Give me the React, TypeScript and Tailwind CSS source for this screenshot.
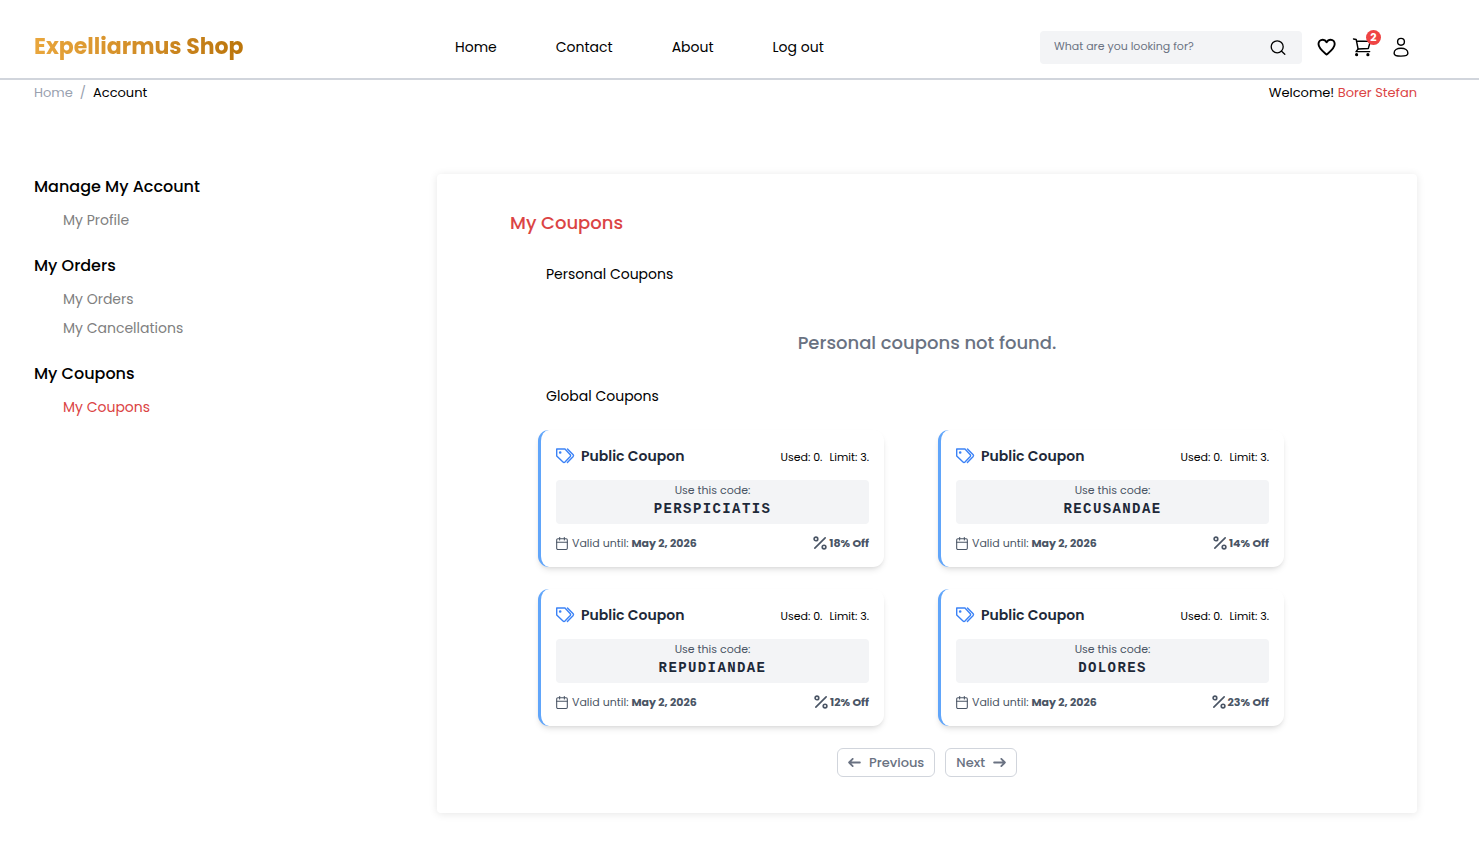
import { Calendar, Percent } from "lucide-react";

type Coupon = { code: string; discount: number };

const coupons: Coupon[] = [
  { code: "PERSPICIATIS", discount: 18 },
  { code: "RECUSANDAE", discount: 14 },
  { code: "REPUDIANDAE", discount: 12 },
  { code: "DOLORES", discount: 23 },
];

const menu = [
  { title: "Manage My Account", items: ["My Profile"] },
  { title: "My Orders", items: ["My Orders", "My Cancellations"] },
  { title: "My Coupons", items: ["My Coupons"] },
];

function TagsIcon() {
  return (
    <svg className="h-4 w-[19px] text-[#3b82f6]" viewBox="0 0 19 16" fill="none" stroke="currentColor" strokeWidth="1.4" strokeLinejoin="round" strokeLinecap="round">
      <path d="M0.7 1H9L14.300 6.700Q15 7.600 14.300 8.500L9 14.100Q8 15.100 7 14.100L0.7 7.900Z" />
      <path d="M11.500 1L17.200 6.800Q17.900 7.600 17.200 8.400L11.400 14.600" />
      <circle cx="4.200" cy="4.500" r="0.600" fill="currentColor" />
    </svg>
  );
}

function Header() {
  return (
    <header className="flex h-20 items-center border-b-2 border-gray-300 pl-[34px] pr-[68px] pt-4">
      <a
        href="#"
        className="w-[421px] shrink-0 text-[22px] leading-8 font-bold"
      >
        <span className="bg-linear-to-r from-[#e9a63c] to-[#bb750a] bg-clip-text text-transparent">
          Expelliarmus Shop
        </span>
      </a>
      <nav className="flex gap-[59px] text-sm leading-6">
        <a href="#">Home</a>
        <a href="#">Contact</a>
        <a href="#">About</a>
        <a href="#">Log out</a>
      </nav>
      <div className="ml-auto flex items-center">
        <form className="flex h-[33px] w-[262px] items-center rounded bg-gray-100 pl-3.5 pr-4">
          <input
            type="text"
            aria-label="Search"
            placeholder="What are you looking for?"
            className="min-w-0 flex-1 bg-transparent pb-0.5 text-[11px] placeholder:text-gray-500 focus:outline-none"
          />
          <button type="button" aria-label="Submit search">
            <svg className="size-4" viewBox="0 0 16 16" fill="none" stroke="black" strokeWidth="1.3" strokeLinecap="round">
              <circle cx="7.2" cy="7.8" r="6" />
              <path d="M11.600 12.200 14.800 15.300" />
            </svg>
          </button>
        </form>
        <a href="#" aria-label="Wishlist" className="ml-3.5">
          <svg className="size-[22px]" viewBox="0 0 22 22" fill="none" stroke="black" strokeWidth="1.9" strokeLinejoin="round">
            <path d="M6.8 3.7C4.3 3.7 2.5 5.700 2.500 8.100C2.500 12.500 7.200 15.800 10.600 18.600C14 15.800 18.700 12.500 18.700 8.100C18.700 5.700 17 3.700 14.600 3.700C12.800 3.700 11.400 4.700 10.600 6.200C9.800 4.700 8.500 3.700 6.800 3.700Z" />
          </svg>
        </a>
        <a href="#" aria-label="Cart" className="relative ml-3.5">
          <svg className="size-5" viewBox="0 0 20 20" fill="none" stroke="black" strokeWidth="1.400" strokeLinecap="round" strokeLinejoin="round">
            <path d="M1.500 2L4.200 2.500L6.100 12L16.300 11.500L18.300 4.400L4.600 4" />
            <path d="M6.100 12L4 14.600H17.700" />
            <circle cx="4.600" cy="17.700" r="0.900" fill="black" />
            <circle cx="15.900" cy="17.700" r="0.900" fill="black" />
          </svg>
          <span className="absolute -top-[7px] left-3.5 flex size-[15px] items-center justify-center rounded-full bg-[#ef4444] text-[11px] leading-none font-bold text-white">
            2
          </span>
        </a>
        <a href="#" aria-label="Account" className="ml-[19px]">
          <svg className="size-5" viewBox="0 0 20 20" fill="none" stroke="black" strokeWidth="1.400">
            <circle cx="10" cy="4.800" r="3.400" />
            <path d="M3.100 16.200C3.100 13.300 6 11.300 10 11.300S16.900 13.300 16.900 16.200C16.900 18.500 14.500 19.100 10 19.100S3.100 18.500 3.100 16.200Z" />
          </svg>
        </a>
      </div>
    </header>
  );
}

function Sidebar() {
  return (
    <aside className="w-[403px] shrink-0 pt-px">
      {menu.map((section) => (
        <section key={section.title} className="mb-[19px]">
          <h2 className="text-base leading-6 font-medium">{section.title}</h2>
          <ul className="mt-[7px] pl-[29px] text-sm leading-[29px]">
            {section.items.map((item) => (
              <li key={item}>
                <a
                  href="#"
                  className={
                    section.title === "My Coupons"
                      ? "text-[#db4444]"
                      : "text-[#808080]"
                  }
                >
                  {item}
                </a>
              </li>
            ))}
          </ul>
        </section>
      ))}
    </aside>
  );
}

function CouponCard({ code, discount }: Coupon) {
  return (
    <article className="w-full max-w-[346px] rounded-[11px] border-l-[3px] border-[#60a5fa] bg-white px-[15px] pt-[15px] pb-3.5 shadow-md">
      <div className="flex items-center justify-between">
        <div className="flex items-center gap-1.5">
          <TagsIcon />
          <h3 className="text-sm leading-[22px] font-semibold text-gray-800">
            Public Coupon
          </h3>
        </div>
        <div className="flex gap-[7px] pt-0.5 text-[11px] leading-5">
          <span>Used: 0.</span>
          <span>Limit: 3.</span>
        </div>
      </div>
      <div className="mt-[13px] rounded bg-gray-100 pt-0.5 pb-1 text-center">
        <p className="text-[11px] leading-4 text-gray-600">Use this code:</p>
        <p className="font-['Liberation_Mono',monospace] text-sm leading-[22px] font-bold tracking-widest text-gray-800">
          {code}
        </p>
      </div>
      <div className="mt-[9px] flex items-center justify-between text-[11px] leading-5 text-gray-600">
        <p className="flex items-center gap-1">
          <Calendar className="h-[13px] w-3" viewBox="2 1 20 22" strokeWidth={1.8} />
          <span>
            Valid until: <b className="font-bold">May 2, 2026</b>
          </span>
        </p>
        <p className="flex items-center gap-0.5 font-bold">
          <Percent className="size-3.5" viewBox="2.500 2.500 19 19" strokeWidth={2.2} />
          {discount}% Off
        </p>
      </div>
    </article>
  );
}

function Pagination() {
  const button =
    "flex h-[29px] items-center gap-2 rounded-md border border-gray-300 bg-white px-2.5 text-[13px] font-medium text-gray-500";
  return (
    <div className="mt-[22px] flex justify-center gap-2.5">
      <button type="button" className={button}>
        <svg className="h-[9px] w-[13px]" viewBox="0 0 14 10" fill="none" stroke="currentColor" strokeWidth="2" strokeLinecap="round" strokeLinejoin="round">
          <path d="M13 5H1m0 0 4 4M1 5l4-4" />
        </svg>
        Previous
      </button>
      <button type="button" className={button}>
        Next
        <svg className="h-[9px] w-[13px]" viewBox="0 0 14 10" fill="none" stroke="currentColor" strokeWidth="2" strokeLinecap="round" strokeLinejoin="round">
          <path d="M1 5h12m0 0L9 1m4 4L9 9" />
        </svg>
      </button>
    </div>
  );
}

export default function App() {
  return (
    <div className="bg-white font-[Poppins,Inter,sans-serif] text-black">
      <Header />
      <div className="flex justify-between pl-[34px] pr-[62px] pt-0.5 text-[13px] leading-[22px]">
        <nav aria-label="Breadcrumb" className="flex gap-[7px] text-gray-400">
          <a href="#">Home</a>
          <span>/</span>
          <span className="text-black">Account</span>
        </nav>
        <p>
          Welcome! <span className="text-[#db4444]">Borer Stefan</span>
        </p>
      </div>
      <div className="flex pl-[34px] pr-[62px] pt-[70px] pb-[35px]">
        <Sidebar />
        <main className="min-w-0 flex-1 rounded bg-white pt-9 pb-9 shadow-[0_1px_8px_rgba(0,0,0,0.1)]">
          <h1 className="pl-[73px] text-lg leading-[26px] font-medium text-[#db4444]">
            My Coupons
          </h1>
          <h2 className="mt-[27px] pl-[109px] text-sm leading-[22px]">
            Personal Coupons
          </h2>
          <p className="mt-[45px] text-center text-lg leading-[26px] font-medium text-gray-500">
            Personal coupons not found.
          </p>
          <h2 className="mt-[29px] pl-[109px] text-sm leading-[22px]">
            Global Coupons
          </h2>
          <div className="mt-[23px] grid grid-cols-2 gap-y-[22px] pl-[101px] pr-[79px]">
            {coupons.map((coupon) => (
              <CouponCard key={coupon.code} {...coupon} />
            ))}
          </div>
          <Pagination />
        </main>
      </div>
    </div>
  );
}
